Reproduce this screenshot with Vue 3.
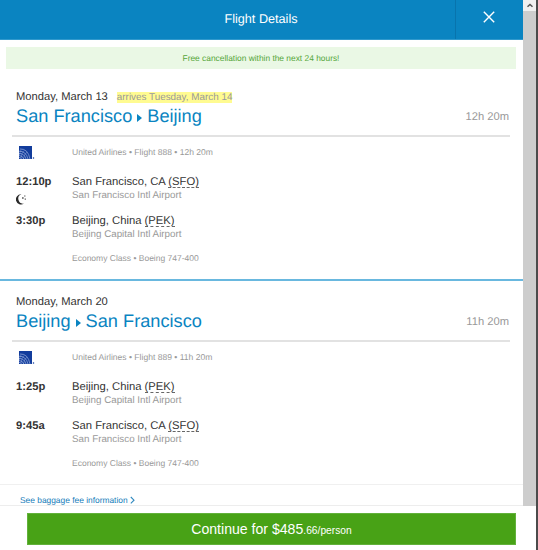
<script setup>
const trips = [
  {
    date: 'Monday, March 13',
    arrives: 'arrives Tuesday, March 14',
    from: 'San Francisco',
    to: 'Beijing',
    duration: '12h 20m',
    flight: 'United Airlines • Flight 888 • 12h 20m',
    overnight: true,
    stops: [
      { time: '12:10p', city: 'San Francisco, CA', code: 'SFO', airport: 'San Francisco Intl Airport' },
      { time: '3:30p', city: 'Beijing, China', code: 'PEK', airport: 'Beijing Capital Intl Airport' },
    ],
  },
  {
    date: 'Monday, March 20',
    from: 'Beijing',
    to: 'San Francisco',
    duration: '11h 20m',
    flight: 'United Airlines • Flight 889 • 11h 20m',
    overnight: false,
    stops: [
      { time: '1:25p', city: 'Beijing, China', code: 'PEK', airport: 'Beijing Capital Intl Airport' },
      { time: '9:45a', city: 'San Francisco, CA', code: 'SFO', airport: 'San Francisco Intl Airport' },
    ],
  },
]
</script>

<template>
  <div class="window">
    <div class="top">
      <main class="content">
        <header class="bar">
          <h1>Flight Details</h1>
          <button class="close" aria-label="Close">
            <svg width="12" height="12" viewBox="0 0 12 12"><path d="M.8 .8 11.2 11.2M11.2 .8 .8 11.2" fill="none" stroke="#fff" stroke-width="1.4" /></svg>
          </button>
        </header>
        <p class="notice">Free cancellation within the next 24 hours!</p>

        <section v-for="trip in trips" :key="trip.date" class="trip">
          <div class="summary">
            <div>
              <div class="date">{{ trip.date }}<mark v-if="trip.arrives">{{ trip.arrives }}</mark></div>
              <h2>
                {{ trip.from }}<svg class="arrow" width="5" height="8" viewBox="0 0 5 8"><path d="M0 0 5 4 0 8Z" fill="#0a84c1" /></svg>{{ trip.to }}
              </h2>
            </div>
            <div class="duration">{{ trip.duration }}</div>
          </div>
          <div class="row flight">
            <svg class="logo" width="16" height="13" viewBox="0 0 16 13">
              <path d="M0 0H13V13H0Z" fill="#123c9c" />
              <g fill="none" stroke="#b4c5ea" stroke-width=".6">
                <path d="M1 3Q9 2.5 11 13M0 5.2Q7 5 9 13M0 7.4Q5.4 7.4 7 13M0 9.5Q3.8 9.6 4.8 13M0 11.4Q2 11.5 2.5 13" />
                <path d="M2 4Q.8 6 .4 9M5 4.5Q2.5 7 2 12M8 6Q5 8 4.5 13" stroke-width=".35" />
              </g>
              <circle cx="14.5" cy="12" r=".75" fill="#123c9c" />
            </svg>
            <span>{{ trip.flight }}</span>
          </div>
          <div v-for="(stop, i) in trip.stops" :key="stop.code" class="row stop">
            <div class="time">
              {{ stop.time }}
              <svg v-if="trip.overnight && i === 0" class="moon" width="11" height="11" viewBox="0 0 11 11">
                <path d="M5.4.3A5.1 5.1 0 1 0 8 9.5 4.8 4.8 0 0 1 5.4.3Z" fill="#292929" />
                <path d="M6.1 3.3h1.5v1.5H6.1zM8.2 1.4h1.2v1.2H8.2zM8.7 4.6h1.1v1.1H8.7z" fill="#444" />
              </svg>
            </div>
            <div>
              <div class="city">{{ stop.city }} <abbr>({{ stop.code }})</abbr></div>
              <div class="airport">{{ stop.airport }}</div>
            </div>
          </div>
          <div class="aircraft">Economy Class • Boeing 747-400</div>
        </section>
        <a class="baggage">See baggage fee information<svg width="5" height="8" viewBox="0 0 5 8"><path d="M.8 1 4 4.2.8 7.4" fill="none" stroke="#3089bf" stroke-width="1.1" /></svg></a>
      </main>
      <div class="scroll">
        <div class="scroll-up"><svg width="6" height="5" viewBox="0 0 6 5"><path d="M.5 3.7 3 1.5 5.5 3.7" fill="none" stroke="#555" stroke-width="1.5" /></svg></div>
      </div>
    </div>
    <footer>
      <button class="continue">Continue for $485<small>.66/person</small></button>
    </footer>
  </div>
</template>

<style>
body { margin: 0; overflow: hidden; }
</style>

<style scoped>
* { box-sizing: border-box; }
.window {
  width: 538px; height: 550px; overflow: hidden; background: #fff;
  border-right: 2px solid #4b4b4b;
  font-family: "Liberation Sans", Arial, sans-serif; color: #333;
  text-rendering: geometricPrecision;
}
h1, h2, p { margin: 0; font-weight: 400; }
button { border: 0; padding: 0; font-family: inherit; color: #fff; }
.top { display: flex; height: 505px; }
.content { width: 523px; overflow: hidden; }
.bar { display: flex; height: 40px; background: #0a84c1; border-bottom: 1px solid #3099cd; color: #fff; }
h1 { flex: 1; padding-left: 67px; text-align: center; font-size: 12.65px; line-height: 38px; }
.close { width: 68px; height: 39px; display: flex; align-items: center; justify-content: center; padding: 0 1px 5px 0; border-left: 1px solid #0874ad; background: none; }
.notice { height: 22px; margin: 7px 7px 0 6px; background: #eaf8e5; color: #55a63a; font-size: 8.4px; line-height: 22px; text-align: center; }
.trip { height: 204px; padding: 13px 13px 0 12px; border-bottom: 1px solid #f0f0f0; }
.trip:first-of-type { height: 212px; padding-top: 20px; border-bottom: 2px solid #69b8df; }
.summary { display: flex; justify-content: space-between; height: 48px; border-bottom: 2px solid #e2e2e2; padding: 0 1px 0 4px; }
.date { height: 15px; font-size: 11.2px; line-height: 17px; white-space: nowrap; }
mark { margin-left: 9px; background: #fffb91; color: #999; font-size: 9.9px; }
h2 { display: flex; align-items: center; height: 25px; color: #0a84c1; font-size: 18.2px; line-height: 25px; }
.arrow { margin: 2px 5px 0; }
.duration { padding-top: 19px; color: #999; font-size: 11.2px; line-height: 18px; }
.row { display: flex; padding-left: 4px; }
.flight { height: 38px; padding-top: 9px; color: #999; font-size: 8.55px; line-height: 13px; }
.logo { width: 16px; margin: 0 37px 0 3px; }
.stop { height: 38.5px; }
.time { width: 56px; font-size: 11.2px; font-weight: 700; line-height: 15px; }
.moon { display: block; margin-top: 4px; margin-left: -.5px; }
.city { font-size: 11.25px; line-height: 15px; }
abbr { display: inline-block; height: 13px; border-bottom: 1px dashed #666; }
.airport { color: #999; font-size: 9.8px; line-height: 12px; }
.aircraft { padding: 0 0 0 60px; color: #999; font-size: 8.5px; line-height: 12px; }
.baggage { display: flex; align-items: center; gap: 2px; padding: 9px 0 0 20px; color: #167dba; font-size: 8.4px; line-height: 12px; }
.scroll { width: 13px; height: 506px; background: #cdcdcd; }
.scroll-up { display: flex; align-items: center; justify-content: center; height: 11px; background: #f0f0f0; }
footer { height: 45px; padding: 7px 20px 0 27px; border-top: 1px solid #ededed; }
.continue { display: block; width: 489px; height: 32px; border: 1px solid #62b13b; background: #48a216; font-size: 14.1px; line-height: 31px; }
small { font-size: 10.25px; }
</style>
